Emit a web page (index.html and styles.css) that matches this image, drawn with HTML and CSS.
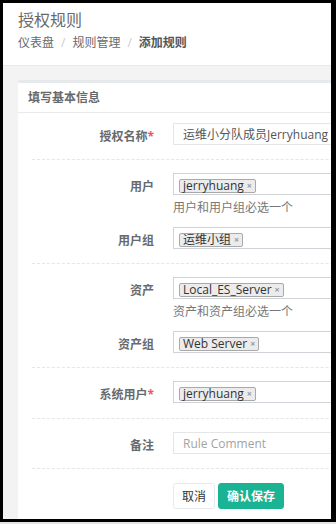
FILE: index.html
```html
<!DOCTYPE html>
<html lang="zh-CN">
  <head>
    <meta charset="UTF-8" />
    <meta name="viewport" content="width=device-width, initial-scale=1.0" />
    <title>添加规则 - 授权规则</title>
    <link rel="stylesheet" href="styles.css">
  </head>
  <body>
    <div class="frame">
      <div class="page-heading">
        <h2>授权规则</h2>
        <ol class="breadcrumb">
          <li>仪表盘</li>
          <li class="sep">/</li>
          <li>规则管理</li>
          <li class="sep">/</li>
          <li class="active">添加规则</li>
        </ol>
      </div>

      <div class="wrapper">
        <div class="ibox">
          <div class="ibox-title">填写基本信息</div>
          <div class="ibox-content">
            <form class="form-horizontal">
              <div class="form-group">
                <label>授权名称<span class="req">*</span></label>
                <div class="field">
                  <input class="form-control" type="text" value="运维小分队成员Jerryhuang" />
                </div>
              </div>

              <div class="hr-line-dashed"></div>

              <div class="form-group">
                <label>用户</label>
                <div class="field">
                  <div class="select-box">
                    <span class="tag">jerryhuang<i>×</i></span>
                  </div>
                  <p class="help-block">用户和用户组必选一个</p>
                </div>
              </div>
              <div class="form-group">
                <label>用户组</label>
                <div class="field">
                  <div class="select-box">
                    <span class="tag">运维小组<i>×</i></span>
                  </div>
                </div>
              </div>

              <div class="hr-line-dashed"></div>

              <div class="form-group">
                <label>资产</label>
                <div class="field">
                  <div class="select-box">
                    <span class="tag">Local_ES_Server<i>×</i></span>
                  </div>
                  <p class="help-block">资产和资产组必选一个</p>
                </div>
              </div>
              <div class="form-group">
                <label>资产组</label>
                <div class="field">
                  <div class="select-box">
                    <span class="tag">Web Server<i>×</i></span>
                  </div>
                </div>
              </div>

              <div class="hr-line-dashed"></div>

              <div class="form-group">
                <label>系统用户<span class="req">*</span></label>
                <div class="field">
                  <div class="select-box">
                    <span class="tag">jerryhuang<i>×</i></span>
                  </div>
                </div>
              </div>

              <div class="hr-line-dashed hr-loose"></div>

              <div class="form-group">
                <label>备注</label>
                <div class="field">
                  <input class="form-control" type="text" placeholder="Rule Comment" />
                </div>
              </div>

              <div class="hr-line-dashed hr-last"></div>

              <div class="form-group">
                <label></label>
                <div class="field buttons">
                  <button type="reset" class="btn btn-white">取消</button>
                  <button type="submit" class="btn btn-primary">确认保存</button>
                </div>
              </div>
            </form>
          </div>
        </div>
      </div>
    </div>
    <div class="bottom-strip"></div>
  </body>
</html>
```

FILE: styles.css
```css
/* Reset some default styles */
* {
  box-sizing: border-box;
}

body,
h2,
p,
ol,
li,
form,
button,
input {
  margin: 0;
  padding: 0;
}

body {
  font-family: "Open Sans", "Noto Sans CJK SC", sans-serif;
  font-size: 12px;
  background-color: #000;
  color: #676a6c;
  height: 524px;
  overflow: hidden;
}

.frame {
  margin: 3px 5px 0 3px;
  height: 516px;
  background-color: #f3f3f4;
  overflow: hidden;
}

.bottom-strip {
  margin-top: 3px;
  height: 2px;
  background-color: #e4e4e4;
}

/* page heading */
.page-heading {
  background-color: #fff;
  height: 63px;
  padding: 7px 15px 0 15px;
  border-bottom: 1px solid #e7eaec;
}

.page-heading h2 {
  font-size: 16px;
  line-height: 20px;
  font-weight: normal;
  color: #676a6c;
}

.breadcrumb {
  list-style: none;
  display: flex;
  margin-top: 4px;
  line-height: 18px;
  color: #676a6c;
}

.breadcrumb .sep {
  color: #ccc;
  padding: 0 7px 0 7px;
}

.breadcrumb .active {
  font-weight: bold;
  color: #555;
}

/* card */
.wrapper {
  padding: 14px 0 0 15px;
}

.ibox {
  width: 400px;
  background-color: #fff;
  height: 500px;
}

.ibox-title {
  border-top: 3px solid #e7eaec;
  border-bottom: 1px solid #e7eaec;
  height: 33px;
  line-height: 29px;
  padding: 0 10px;
  font-weight: bold;
  color: #676a6c;
}

.ibox-content {
  padding: 10px 0 10px 14px;
}

/* form */
.form-group {
  display: grid;
  grid-template-columns: 122px 1fr;
  column-gap: 19px;
  margin-bottom: 10px;
}

.form-group label {
  text-align: right;
  padding-top: 5px;
  line-height: 17px;
  font-weight: bold;
  color: #676a6c;
}

.req {
  color: #ed5565;
  font-weight: bold;
}

/* top margin collapses with the group's bottom margin */
.hr-line-dashed {
  border-top: 1px dashed #e4e6e8;
  height: 1px;
  margin: 14px 0 13px 0;
}

.hr-loose {
  margin-top: 15px;
}

.hr-last {
  margin-bottom: 14px;
}

.form-control {
  display: block;
  width: 220px;
  height: 22px;
  border: 1px solid #e5e6e7;
  padding: 0 9px;
  font-family: "Open Sans", "Noto Sans CJK SC", sans-serif;
  font-size: 12px;
  color: #555;
  outline: none;
}

.form-control::placeholder {
  color: #a3a3a3;
}

.select-box {
  height: 22px;
  width: 220px;
  border: 1px solid #cfd3d8;
  padding: 3px 5px;
}

.tag {
  display: inline-flex;
  align-items: center;
  height: 14px;
  padding: 0 3px 0 3px;
  border: 1px solid #a9a9a9;
  border-radius: 2px;
  background-color: #ececec;
  color: #333;
  font-size: 12px;
  line-height: 12px;
}

.tag i {
  font-style: normal;
  font-size: 9px;
  font-weight: bold;
  color: #999;
  margin-left: 3px;
}

.help-block {
  margin-top: 4px;
  line-height: 18px;
  color: #777;
}

.buttons {
  display: flex;
  gap: 3px;
}

.btn {
  height: 26px;
  padding: 0 8px;
  border-radius: 3px;
  font-family: "Open Sans", "Noto Sans CJK SC", sans-serif;
  font-size: 12px;
  cursor: pointer;
}

.btn-white {
  background-color: #fff;
  border: 1px solid #e7eaec;
  color: #333;
}

.btn-primary {
  background-color: #1ab394;
  border: 1px solid #1ab394;
  color: #fff;
  font-weight: bold;
}
```
